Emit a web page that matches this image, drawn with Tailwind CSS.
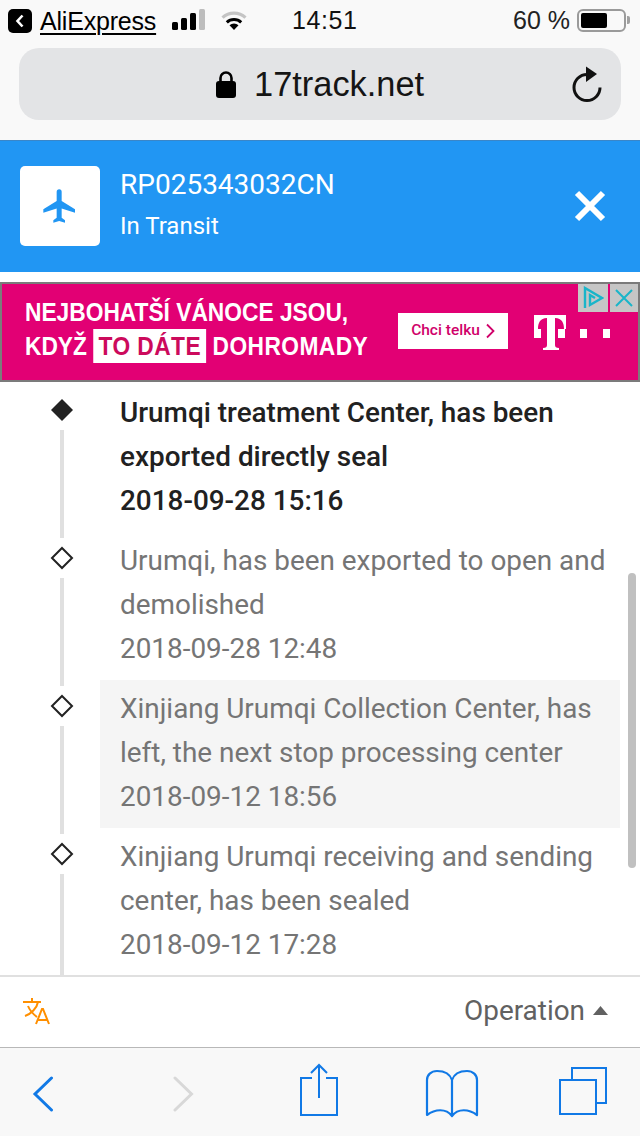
<!DOCTYPE html>
<html>
<head>
<meta charset="utf-8">
<script src="https://cdn.jsdelivr.net/npm/@tailwindcss/browser@4"></script>
</head>
<body class="m-0 bg-white">
<div class="relative w-[640px] h-[1136px] overflow-hidden flex flex-col font-['Roboto',sans-serif] bg-white">
  <!-- browser chrome -->
  <header class="h-[140px] shrink-0 bg-[#f9f9f9] flex flex-col font-['Liberation_Sans',sans-serif]">
    <div class="h-[42px] mb-[6px] relative flex items-center text-black">
      <div class="ml-[8px] w-[24px] h-[24px] bg-black rounded-[5px] flex items-center justify-center">
        <svg width="10" height="14" viewBox="0 0 10 14" fill="none"><path d="M7.500 1.500 2.500 7l5 5.500" stroke="#fff" stroke-width="2.600"/></svg>
      </div>
      <span class="ml-[8px] text-[25px] leading-[30px] underline underline-offset-[3px] decoration-[1.5px] tracking-[-0.2px]">AliExpress</span>
      <svg class="ml-[16px] -mt-[2px]" width="34" height="22" viewBox="0 0 34 22"><rect x="0" y="13" width="6" height="8" rx="1.500"/><rect x="9" y="9" width="6" height="12" rx="1.500"/><rect x="18" y="4" width="6" height="17" rx="1.500"/><rect x="27" y="0" width="6" height="21" rx="1.500" fill="#bdbdbd"/></svg>
      <svg class="ml-[14px] -mt-[2px]" width="28" height="22" viewBox="0 0 28 22"><path d="M14 21 9.500 16.300a6.500 6.500 0 0 1 9 0Z"/><path d="M6.800 13.300a10.500 10.500 0 0 1 14.400 0" fill="none" stroke="#000" stroke-width="3"/><path d="M2.500 8.600a16.800 16.800 0 0 1 23 0" fill="none" stroke="#c4c4c4" stroke-width="3.200"/></svg>
      <span class="absolute left-[292px] text-[25px] font-medium tracking-[0.6px] text-[#111]">14:51</span>
      <span class="absolute left-[513px] text-[25px] text-[#222]">60 %</span>
      <div class="absolute left-[577px] top-[9px] w-[49px] h-[23px] rounded-[6px] border-2 border-[#9a9a9a] p-[2px]"><div class="w-[26px] h-full bg-black rounded-[2px]"></div></div>
      <div class="absolute left-[627px] top-[16px] w-[3px] h-[8px] bg-[#a0a0a0] rounded-r-[2px]"></div>
    </div>
    <div class="mx-[19px] h-[72px] bg-[#e3e4e6] rounded-[20px] flex items-center relative">
      <svg class="absolute left-[196px] top-[23px]" width="22" height="27" viewBox="0 0 22 27"><rect x="1" y="10" width="20" height="17" rx="3"/><path d="M5.500 11V7a5.500 5.500 0 0 1 11 0v4" fill="none" stroke="#000" stroke-width="2.600"/></svg>
      <span class="absolute left-[235px] text-[34.4px] leading-[40px] text-[#151515]">17track.net</span>
      <svg class="absolute left-[551px] top-[17px]" width="34" height="38" viewBox="0 0 34 38" fill="none"><path d="M17 9.500a13 13 0 1 0 13 13" stroke="#111" stroke-width="3"/><path d="M16 1.500 27 9 16 17Z" fill="#111"/></svg>
    </div>
  </header>
  <!-- tracking header -->
  <section class="h-[132px] shrink-0 bg-[#2196f3] flex items-center pl-[20px] pr-[34px] pb-[2px] text-white border-t border-[#3a86c8]">
    <div class="w-[80px] h-[80px] bg-white rounded-[5px] flex items-center justify-center">
      <svg width="40" height="40" viewBox="0 0 24 24" fill="#2196f3"><path d="M21 16v-2l-8-5V3.500a1.500 1.500 0 0 0-3 0V9l-8 5v2l8-2.500V19l-2 1.500V22l3.500-1 3.500 1v-1.500L13 19v-5.500Z"/></svg>
    </div>
    <div class="ml-[20px] flex-1">
      <div class="text-[28px] leading-[36px] -mt-[7px]">RP025343032CN</div>
      <div class="text-[24px] leading-[30px] mt-[8px] -mb-[3px]">In Transit</div>
    </div>
    <svg width="32" height="32" viewBox="0 0 32 32"><path d="M3 3 29 29M29 3 3 29" stroke="#fff" stroke-width="6"/></svg>
  </section>
  <div class="h-[10px] shrink-0 bg-white"></div>
  <!-- ad -->
  <section class="relative h-[100px] shrink-0 bg-[#e20074] border-2 border-[#7b7b7b] flex items-center pl-[23px] text-white font-['Liberation_Sans',sans-serif]">
    <div class="w-[375px] -mt-[6px] font-bold text-[26px] leading-[34px] scale-x-[0.875] origin-left whitespace-nowrap">
      <div>NEJBOHATŠÍ VÁNOCE JSOU,</div>
      <div>KDYŽ <span class="inline-block bg-white text-[#cc0a5c] px-[6px] tracking-[0.5px]">TO DÁTE</span> <span class="tracking-[0.5px]">DOHROMADY</span></div>
    </div>
    <div class="absolute left-[396px] top-[29px] w-[110px] h-[36px] bg-white text-[#d0006a] flex items-center justify-center gap-[6px] font-['Roboto',sans-serif] text-[15.5px] font-medium">
      <span>Chci telku</span>
      <svg width="9" height="16" viewBox="0 0 9 16" fill="none"><path d="M1 1.500 7.500 8 1 14.500" stroke="#d0006a" stroke-width="1.800"/></svg>
    </div>
    <svg class="absolute left-[530px] top-[30px]" width="80" height="40" viewBox="0 0 80 40" fill="#fff"><path d="M2 1h32v14h-2c0-6-2-11-9-11v27c0 2 1 3 4 3v2H11v-2c3 0 4-1 4-3V4C8 4 6 9 6 15H2Z"/><rect x="2" y="15" width="7" height="9"/><rect x="26" y="15" width="7" height="9"/><rect x="48" y="15" width="7" height="9"/><rect x="71" y="15" width="7" height="9"/></svg>
    <div class="absolute right-0 top-0 flex gap-[2px]">
      <div class="w-[30px] h-[28px] bg-[#c6c6c6] flex items-center justify-center"><svg width="22" height="24" viewBox="0 0 22 24" fill="none"><path d="M3 22V2L20 12 8 19V9l5 3" stroke="#19b5c9" stroke-width="2.400"/></svg></div>
      <div class="w-[28px] h-[28px] bg-[#c6c6c6] flex items-center justify-center"><svg width="20" height="20" viewBox="0 0 20 20"><path d="M2 2 18 18M18 2 2 18" stroke="#19b5c9" stroke-width="2"/></svg></div>
    </div>
  </section>
  <!-- timeline -->
  <main class="h-[593px] shrink-0 overflow-hidden pt-[2px] text-[#757575] text-[27.9px] leading-[44px]">
    <article class="flex h-[148px] text-[#212121] font-medium">
      <div class="w-[24px] ml-[50px] mr-[26px] flex flex-col items-center shrink-0">
        <svg class="mt-[14px] shrink-0" width="24" height="24" viewBox="0 0 24 24"><path d="M12 1 23 12 12 23 1 12Z" fill="#222"/></svg>
        <div class="w-[4px] h-[108px] mt-[8px] bg-[#e0e0e0] shrink-0"></div>
      </div>
      <div class="flex-1 mr-[20px] pt-[7px] pb-[9px] pl-[20px]">Urumqi treatment Center, has been<br>exported directly seal<br>2018-09-28 15:16</div>
    </article>
    <article class="flex h-[148px]">
      <div class="w-[24px] ml-[50px] mr-[26px] flex flex-col items-center shrink-0">
        <svg class="mt-[14px] shrink-0" width="24" height="24" viewBox="0 0 24 24"><path d="M12 2 22 12 12 22 2 12Z" fill="#fff" stroke="#222" stroke-width="2"/></svg>
        <div class="w-[4px] h-[108px] mt-[8px] bg-[#e0e0e0] shrink-0"></div>
      </div>
      <div class="flex-1 mr-[20px] pt-[7px] pb-[9px] pl-[20px]">Urumqi, has been exported to open and<br>demolished<br>2018-09-28 12:48</div>
    </article>
    <article class="flex h-[148px]">
      <div class="w-[24px] ml-[50px] mr-[26px] flex flex-col items-center shrink-0">
        <svg class="mt-[14px] shrink-0" width="24" height="24" viewBox="0 0 24 24"><path d="M12 2 22 12 12 22 2 12Z" fill="#fff" stroke="#222" stroke-width="2"/></svg>
        <div class="w-[4px] h-[108px] mt-[8px] bg-[#e0e0e0] shrink-0"></div>
      </div>
      <div class="flex-1 mr-[20px] pt-[7px] pb-[9px] pl-[20px] bg-[#f5f5f5]">Xinjiang Urumqi Collection Center, has<br>left, the next stop processing center<br>2018-09-12 18:56</div>
    </article>
    <article class="flex h-[148px]">
      <div class="w-[24px] ml-[50px] mr-[26px] flex flex-col items-center shrink-0">
        <svg class="mt-[14px] shrink-0" width="24" height="24" viewBox="0 0 24 24"><path d="M12 2 22 12 12 22 2 12Z" fill="#fff" stroke="#222" stroke-width="2"/></svg>
        <div class="w-[4px] h-[108px] mt-[8px] bg-[#e0e0e0] shrink-0"></div>
      </div>
      <div class="flex-1 mr-[20px] pt-[7px] pb-[9px] pl-[20px]">Xinjiang Urumqi receiving and sending<br>center, has been sealed<br>2018-09-12 17:28</div>
    </article>
  </main>
  <div class="absolute left-[628px] top-[573px] w-[8px] h-[295px] rounded-full bg-[#c0c0c0]"></div>
  <!-- operation bar -->
  <section class="h-[72px] shrink-0 border-t-2 border-[#e0e0e0] bg-white flex items-center justify-between pl-[22px] pr-[32px] pb-[2px]">
    <svg width="28" height="28" viewBox="0 0 28 28" fill="none" stroke="#ff8f00" stroke-width="2"><path d="M1 5h18M10 1v4M16 5c-1 6-7 12-13 14M6 9c2 5 5 8 9 11"/><path d="M14 27l6-15h1l6 15M16 23h9"/></svg>
    <div class="flex items-center text-[#616161] text-[27.9px]">
      <span>Operation</span>
      <svg class="ml-[8px]" width="15" height="9" viewBox="0 0 15 9"><path d="M7.500 0 15 9H0Z" fill="#616161"/></svg>
    </div>
  </section>
  <!-- safari toolbar -->
  <footer class="flex-1 bg-[#f8f8f8] border-t border-[#b8b8b8] relative">
    <svg class="absolute left-[30px] top-[28px]" width="26" height="38" viewBox="0 0 26 38" fill="none"><path d="M21.500 2 5 18l16.500 16" stroke="#1179e6" stroke-width="3" stroke-linecap="round"/></svg>
    <svg class="absolute left-[170px] top-[28px]" width="26" height="38" viewBox="0 0 26 38" fill="none"><path d="M5 2l16.500 16L5 34" stroke="#d8d8d8" stroke-width="3" stroke-linecap="round"/></svg>
    <svg class="absolute left-[298px] top-[15px]" width="44" height="54" viewBox="0 0 44 54" fill="none" stroke="#1179e6" stroke-width="2"><path d="M14 15H3v37h36V15H28"/><path d="M21 2v33M13 10l8-8 8 8"/></svg>
    <svg class="absolute left-[425px] top-[20px]" width="54" height="50" viewBox="0 0 54 50" fill="none" stroke="#1179e6" stroke-width="2.200" stroke-linejoin="round" stroke-linecap="round"><path d="M27 12C25 6 19 3 12 3 6 3 2 7 2 12V47C10 41 21 40 27 48 33 40 44 41 52 47V12C52 7 48 3 42 3 35 3 29 6 27 12V48"/></svg>
    <svg class="absolute left-[557px] top-[18px]" width="52" height="52" viewBox="0 0 52 52" fill="none" stroke="#1179e6" stroke-width="2"><path d="M3 14h36v34H3Z"/><path d="M15 14V2h34v35H40"/></svg>
  </footer>
</div>
</body>
</html>
